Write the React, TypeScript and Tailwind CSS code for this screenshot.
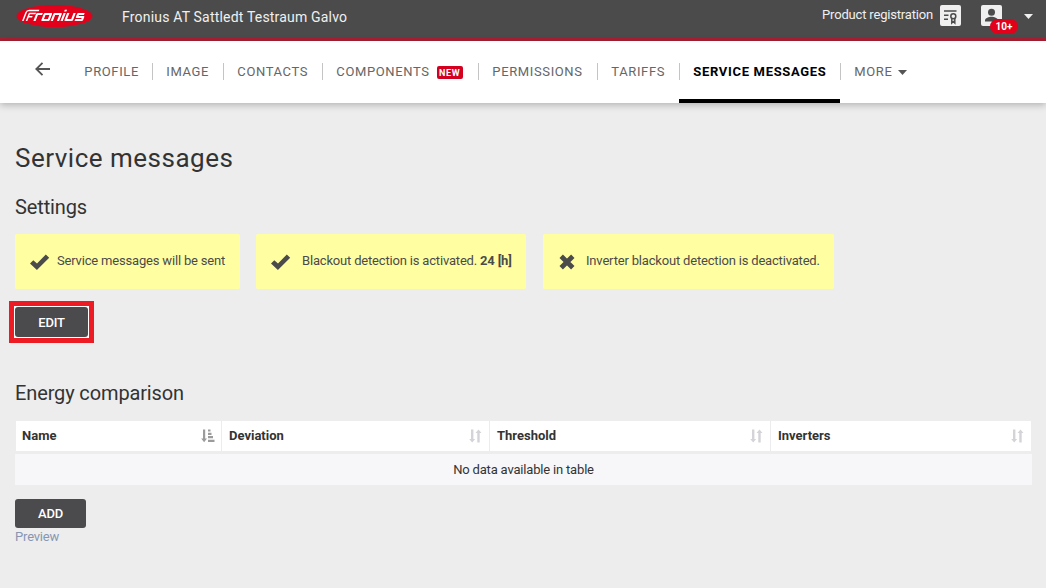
import type { ReactNode } from "react";

function Logo() {
  return (
    <svg width="77" height="22" viewBox="0 0 77 22" className="block">
      <ellipse cx="38.5" cy="11" rx="38" ry="11" fill="#e2001a" />
      <g fill="none" stroke="#fff" strokeWidth="2.1" strokeLinejoin="round" transform="translate(4.5 0) scale(1.06 1) skewX(-20)">
        <path d="M8 16V7.500Q8 5.500 10 5.500H19.500M11.500 16V8.500H17.500M11.500 11.800H15.500" strokeWidth="1.500" />
        <path d="M19 16V9H24" />
        <path d="M26.200 9H32V15H26.200Z" />
        <path d="M35.300 16V9H41.200V16" />
        <path d="M44.600 8V16M44.600 4.800V6.500" />
        <path d="M48 8V15H54V8" />
        <path d="M63.500 9H57.700V12H63.500V15H56.800" />
      </g>
    </svg>
  );
}

function RegistrationIcon() {
  return (
    <svg width="21" height="21" viewBox="0 0 21 21" className="block">
      <rect width="21" height="21" rx="2" fill="#efefef" />
      <g stroke="#4b4b4b" strokeWidth="1.500" fill="none">
        <path d="M4 6H16.500M4 10.300H8.500M4 14.300H8" />
        <circle cx="13.300" cy="11.300" r="2.500" />
        <path d="M11.800 13.500V18L13.300 16.500L14.800 18V13.500" />
      </g>
    </svg>
  );
}

function UserIcon() {
  return (
    <svg width="21" height="21" viewBox="0 0 21 21" className="block">
      <rect width="21" height="21" rx="2" fill="#efefef" />
      <circle cx="10.500" cy="7.300" r="3.500" fill="#4b4b4b" />
      <path d="M4 16.500V15.500C4 13 8 11.800 10.500 11.800S17 13 17 15.500V16.500Z" fill="#4b4b4b" />
    </svg>
  );
}

function Caret({ className }: { className: string }) {
  return (
    <svg width="9" height="5" viewBox="0 0 9 5" className={className}>
      <path d="M0 0H9L4.500 5Z" fill="currentColor" />
    </svg>
  );
}

function CheckIcon() {
  return (
    <svg width="20" height="16" viewBox="0 0 20 16" className="block">
      <path d="M0 9.500L3.300 6.300L7 9.600L15.800 0.500L19.200 3.700L6.900 15.900Z" fill="#4b4b4b" />
    </svg>
  );
}

function CrossIcon() {
  return (
    <svg width="16" height="16" viewBox="0 0 16 16" className="block">
      <path d="M2.200 2.200L13.800 13.800M13.800 2.200L2.200 13.800" stroke="#4b4b4b" strokeWidth="4.800" />
    </svg>
  );
}

function SortIcon({ active = false }: { active?: boolean }) {
  return active ? (
    <svg width="14" height="14" viewBox="0 0 14 14" className="block">
      <path d="M2 0.500H4.200V9.500H6L3.100 13.300L0.200 9.500H2Z" fill="#9b9b9b" />
      <path d="M7 1.500H9.500M7 4.800H10.500M7 8.200H12M7 11.800H13.500" stroke="#9b9b9b" strokeWidth="2.200" />
    </svg>
  ) : (
    <svg width="14" height="14" viewBox="0 0 14 14" className="block">
      <path d="M2 0.500H4.400V10H6.200L3.200 13.500L0.200 10H2Z" fill="#d4d4d8" />
      <path d="M8.300 13.500H10.700V4H12.500L9.500 0.500L6.500 4H8.300Z" fill="#d4d4d8" />
    </svg>
  );
}

function NavItem({ children, width, active = false, first = false }: { children: ReactNode; width: string; active?: boolean; first?: boolean }) {
  return (
    <li className={`${width} relative flex h-full shrink-0 items-center whitespace-nowrap pl-[14.3px]`}>
      {children}
      {!first && <span className="absolute left-0 top-[22px] h-[17px] w-px bg-[#c4c4c4]" />}
      {active && <span className="absolute inset-x-0 bottom-0 h-1 bg-black" />}
    </li>
  );
}

function Notice({ width, icon, children }: { width: string; icon: ReactNode; children: ReactNode }) {
  return (
    <div className={`${width} flex h-[55px] items-center whitespace-nowrap rounded-[2px] bg-[#ffffa2] pl-[15px] text-[#4b4b4b]`}>
      {icon}
      {children}
    </div>
  );
}

function HeadCell({ label, width, active = false, last = false }: { label: string; width: string; active?: boolean; last?: boolean }) {
  return (
    <div className={`${width} flex h-[30px] shrink-0 items-center justify-between pr-[6px] font-bold tracking-normal ${active ? "pl-[6px]" : "pl-[7px]"} ${last ? "" : "border-r border-[#ececee]"}`}>
      <span>{label}</span>
      <SortIcon active={active} />
    </div>
  );
}

export default function App() {
  return (
    <div className="h-[588px] w-[1046px] overflow-hidden bg-[#ededee] font-['Roboto',sans-serif] text-[13px] leading-5 tracking-[-0.18px] text-[#333]">
      <header className="flex h-[41px] items-start border-b-[3px] border-[#a91f33] bg-[#4b4b4b] text-[#f0f0f0]">
        <div className="ml-4 mt-[5px]"><Logo /></div>
        <h1 className="ml-[29px] mt-[7px] text-[14px] tracking-[0.19px]">Fronius AT Sattledt Testraum Galvo</h1>
        <div className="ml-auto flex items-start">
          <span className="mt-[5px]">Product registration</span>
          <div className="ml-[7px] mt-[5px]"><RegistrationIcon /></div>
          <div className="relative ml-[20px] mt-[5px]">
            <UserIcon />
            <span className="absolute left-[9px] top-[14px] flex h-[15px] w-[28px] items-center justify-center rounded-full bg-[#e2001a] text-[10px] font-bold tracking-normal text-white">10+</span>
          </div>
          <Caret className="ml-[22px] mr-[13px] mt-[14px]" />
        </div>
      </header>
      <nav className="relative flex h-[62px] bg-white shadow-[0_2px_7px_rgba(0,0,0,0.25)]">
        <svg width="16" height="14" viewBox="0 0 16 14" className="ml-[35px] mt-[21px] block" fill="none" stroke="#555" strokeWidth="1.800">
          <path d="M15 7H1.500M7.500 0.800L1.300 7L7.500 13.200" />
        </svg>
        <ul className="ml-[19px] flex h-full tracking-[0.63px] text-[#666]">
          <NavItem width="w-[82px]" first><span>PROFILE</span></NavItem>
          <NavItem width="w-[71px]"><span>IMAGE</span></NavItem>
          <NavItem width="w-[99px]"><span>CONTACTS</span></NavItem>
          <NavItem width="w-[156px]">
            <span>COMPONENTS</span>
            <span className="ml-[7px] mt-px flex h-[13px] w-[26px] items-center justify-center rounded-[2px] bg-[#d3001f] text-[9px] font-bold tracking-[0.7px] text-white">NEW</span>
          </NavItem>
          <NavItem width="w-[119px]"><span>PERMISSIONS</span></NavItem>
          <NavItem width="w-[82px]"><span>TARIFFS</span></NavItem>
          <NavItem width="w-[161px]" active><span className="font-bold tracking-[0.68px] text-black">SERVICE MESSAGES</span></NavItem>
          <NavItem width="w-[80px]">
            <span>MORE</span>
            <Caret className="ml-[5px] mt-px text-[#555]" />
          </NavItem>
        </ul>
      </nav>
      <main className="px-[15px] pt-[39px]">
        <h2 className="text-[26px] leading-8 tracking-[0.5px]">Service messages</h2>
        <h3 className="mt-[21px] text-[20px] leading-6 tracking-[-0.13px]">Settings</h3>
        <div className="mt-[15px] flex">
          <Notice width="w-[225px]" icon={<CheckIcon />}><span className="ml-[7px] -mt-[2px]">Service messages will be sent</span></Notice>
          <Notice width="ml-4 w-[270px]" icon={<CheckIcon />}><span className="ml-[11px] -mt-[2px]">Blackout detection is activated. <b>24 [h]</b></span></Notice>
          <Notice width="ml-[17px] w-[291px]" icon={<span className="ml-px"><CrossIcon /></span>}><span className="ml-[11px] -mt-[2px]">Inverter blackout detection is deactivated.</span></Notice>
        </div>
        <div className="-ml-[6px] mt-3 flex h-[42px] w-[85px] items-center justify-center border-[5px] border-[#ed1c24] bg-white">
          <button className="h-[30px] w-[73px] rounded-[3px] bg-[#4b4a4c] pt-px font-medium text-white">EDIT</button>
        </div>
        <h3 className="mt-[38px] text-[20px] leading-6 tracking-[-0.13px]">Energy comparison</h3>
        <section className="mt-[16px]">
          <div className="ml-px flex w-[1015px] bg-white">
            <HeadCell label="Name" width="w-[206px]" active />
            <HeadCell label="Deviation" width="w-[268px]" />
            <HeadCell label="Threshold" width="w-[281px]" />
            <HeadCell label="Inverters" width="w-[260px]" last />
          </div>
          <div className="mt-[3px] flex h-[31px] w-[1017px] items-center justify-center bg-[#f7f7f9]">No data available in table</div>
        </section>
        <button className="mt-[14px] block h-[29px] w-[71px] rounded-[3px] bg-[#4b4a4c] font-medium text-white">ADD</button>
        <a className="mt-[-1px] block text-[#8797b2]">Preview</a>
      </main>
    </div>
  );
}
